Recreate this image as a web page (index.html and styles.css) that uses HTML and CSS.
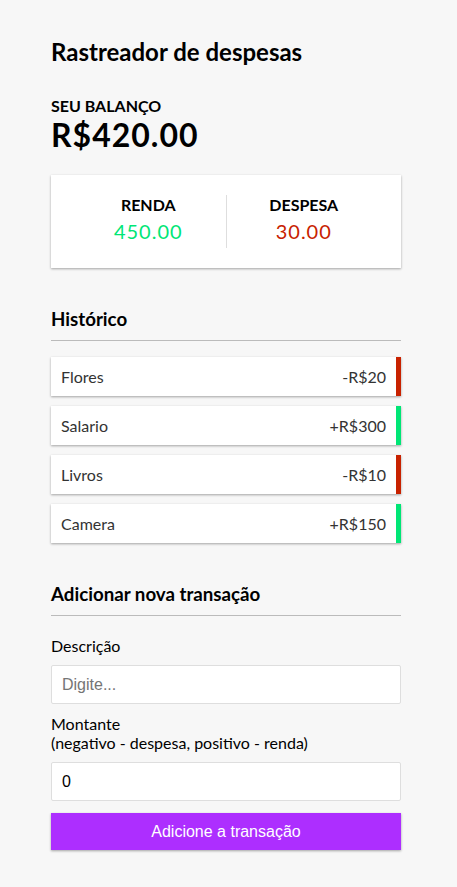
FILE: index.html
```html
<!DOCTYPE html>
<html lang="pt-BR">
<head>
<meta charset="utf-8">
<title>Rastreador de despesas</title>
<link rel="stylesheet" href="styles.css">
</head>
<body>
  <main class="app">
    <h2 class="title">Rastreador de despesas</h2>

    <section class="balance">
      <h4 class="caps">Seu balanço</h4>
      <h1 class="balance-value">R$420.00</h1>
    </section>

    <section class="summary">
      <div class="summary-col summary-col-first">
        <h4 class="caps">Renda</h4>
        <p class="money money-plus">450.00</p>
      </div>
      <div class="summary-col">
        <h4 class="caps">Despesa</h4>
        <p class="money money-minus">30.00</p>
      </div>
    </section>

    <h3 class="section-title">Histórico</h3>
    <ul class="list">
      <li class="item item-minus"><span>Flores</span><span>-R$20</span></li>
      <li class="item item-plus"><span>Salario</span><span>+R$300</span></li>
      <li class="item item-minus"><span>Livros</span><span>-R$10</span></li>
      <li class="item item-plus"><span>Camera</span><span>+R$150</span></li>
    </ul>

    <h3 class="section-title">Adicionar nova transação</h3>
    <form class="form">
      <div class="form-control">
        <label class="label" for="text">Descrição</label>
        <input class="field" type="text" id="text" placeholder="Digite...">
      </div>
      <div class="form-control">
        <label class="label" for="amount">Montante<br>(negativo - despesa, positivo - renda)</label>
        <input class="field" type="number" id="amount" value="0">
      </div>
      <button class="btn" type="button">Adicione a transação</button>
    </form>
  </main>
</body>
</html>
```

FILE: styles.css
```css
* {
  box-sizing: border-box;
}

body {
  margin: 0;
  padding: 0 5px 0 0;
  background-color: #f7f7f7;
  font-family: "Lato", "Liberation Sans", sans-serif;
  color: #000;
  display: flex;
  flex-direction: column;
  align-items: center;
}

.app {
  width: 350px;
  padding-top: 37px;
}

.title {
  font-size: 24px;
  margin: 0 0 30px;
}

.caps {
  margin: 0;
  font-size: 16px;
  text-transform: uppercase;
}

.balance-value {
  font-size: 32px;
  letter-spacing: 1px;
  margin: 0;
}

.summary {
  background-color: #fff;
  box-shadow: 0 1px 3px rgba(0, 0, 0, 0.12), 0 1px 2px rgba(0, 0, 0, 0.24);
  padding: 20px;
  display: flex;
  justify-content: space-between;
  margin: 21px 0 20px;
}

.summary-col {
  flex: 1;
  text-align: center;
}

.summary-col-first {
  border-right: 1px solid #dedede;
}

.money {
  font-size: 20px;
  letter-spacing: 1px;
  margin: 5px 0;
}

.money-plus {
  color: #00e676;
}

.money-minus {
  color: #c82200;
}

.section-title {
  font-size: 18.72px;
  border-bottom: 1px solid #bbb;
  padding-bottom: 10px;
  margin: 40px 0 10px;
}

.list {
  list-style-type: none;
  padding: 0;
  margin: 16px 0 40px;
}

.item {
  background-color: #fff;
  box-shadow: 0 1px 3px rgba(0, 0, 0, 0.12), 0 1px 2px rgba(0, 0, 0, 0.24);
  color: #333;
  display: flex;
  justify-content: space-between;
  padding: 10px;
  margin: 10px 0;
  font-size: 16px;
}

.item-plus {
  border-right: 5px solid #00e676;
}

.item-minus {
  border-right: 5px solid #c82200;
}

.form {
  margin: 0;
}

.label {
  display: inline-block;
  margin: 10px 0;
  font-size: 16px;
}

.field {
  display: block;
  width: 100%;
  border: 1px solid #dedede;
  border-radius: 2px;
  font-family: "Liberation Sans", Arial, sans-serif;
  font-size: 16px;
  line-height: 19px;
  padding: 9px 10px;
  background: #fff;
  color: #000;
}

.field::placeholder {
  color: #757575;
}

.btn {
  display: block;
  width: 100%;
  cursor: pointer;
  background-color: #ad2eff;
  box-shadow: 0 1px 3px rgba(0, 0, 0, 0.12), 0 1px 2px rgba(0, 0, 0, 0.24);
  color: #fff;
  border: 0;
  font-family: "Liberation Sans", Arial, sans-serif;
  font-size: 16px;
  line-height: 17.4px;
  margin: 12px 0 30px;
  padding: 10px;
}
```
